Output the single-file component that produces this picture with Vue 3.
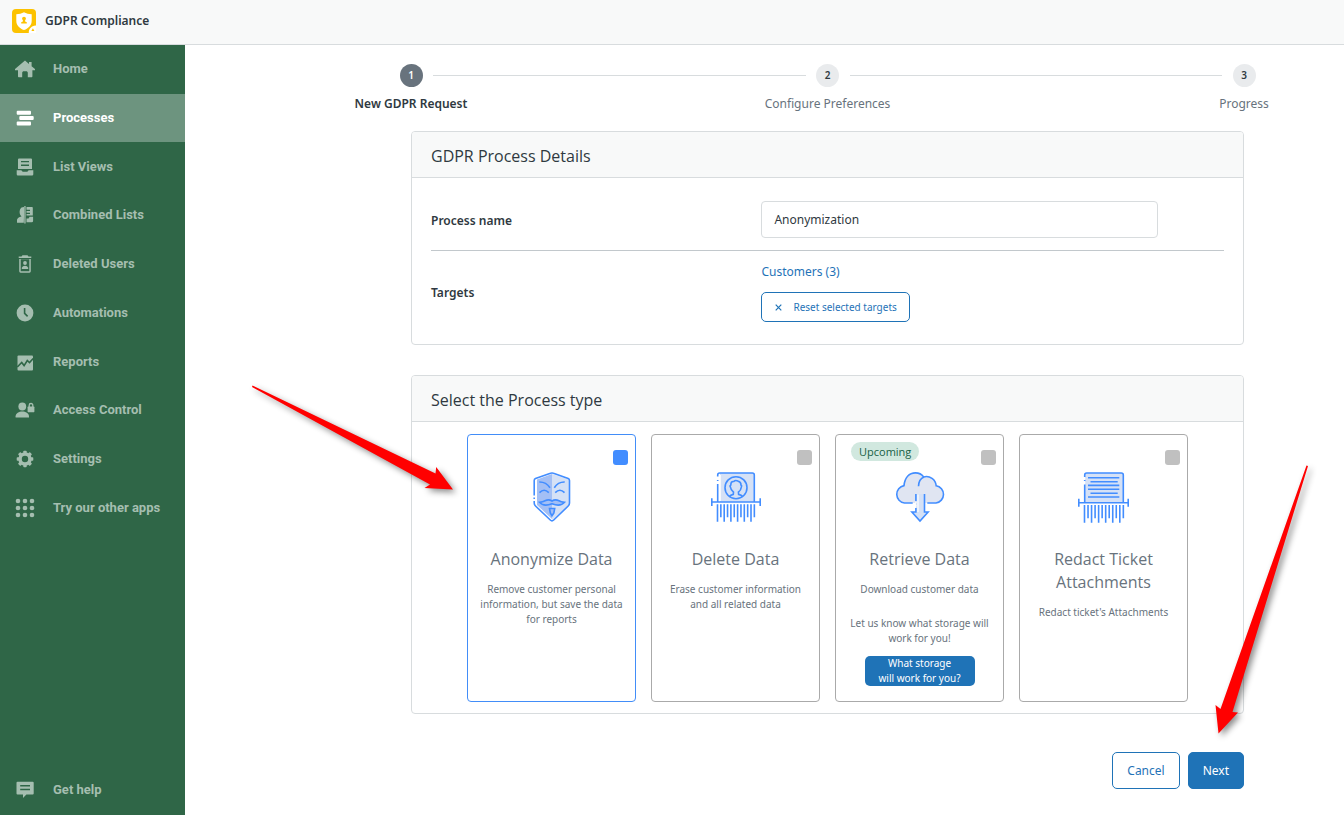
<script setup>
import { ref } from 'vue'

const navItems = [
  { label: 'Home', icon: 'home' },
  { label: 'Processes', icon: 'processes' },
  { label: 'List Views', icon: 'list' },
  { label: 'Combined Lists', icon: 'combined' },
  { label: 'Deleted Users', icon: 'deleted' },
  { label: 'Automations', icon: 'clock' },
  { label: 'Reports', icon: 'reports' },
  { label: 'Access Control', icon: 'access' },
  { label: 'Settings', icon: 'settings' },
  { label: 'Try our other apps', icon: 'apps' },
]
const active = ref('Processes')
const processName = ref('Anonymization')
const selected = ref(['anonymize'])

const gearTeeth = [0, 45, 90, 135, 180, 225, 270, 315]
const dots = [3, 10, 17]
const longStrips = [0, 2, 4, 6, 8, 10]
const shortStrips = [1, 3, 5, 7, 9, 11]
const stripPath = (step, top, longEnd, shortEnd) =>
  longStrips.map((i) => `M${6.5 + i * step} ${top}V${longEnd}`).join('') +
  shortStrips.map((i) => `M${6.5 + i * step} ${top}V${shortEnd}`).join('')

const types = [
  { id: 'anonymize', title: 'Anonymize Data', text: 'Remove customer personal information, but save the data for reports' },
  { id: 'delete', title: 'Delete Data', text: 'Erase customer information and all related data' },
  { id: 'retrieve', title: 'Retrieve Data', text: 'Download customer data', upcoming: true },
  { id: 'redact', title: 'Redact Ticket Attachments', text: "Redact ticket's Attachments" },
]
</script>

<template>
  <div class="app">
    <header class="topbar">
      <svg class="logo" viewBox="0 0 24 24" aria-hidden="true">
        <rect width="24" height="24" rx="4" fill="#fcc200" />
        <path d="M12 3.2c2.3 1.2 4.800 1.900 7.700 2v6.600c0 4.600-3.200 7.700-7.700 9.300-4.500-1.600-7.700-4.700-7.700-9.300V5.200c2.900-.1 5.400-.8 7.700-2z" fill="#fff" />
        <circle cx="12" cy="9.600" r="1.900" fill="#fcc200" />
        <path d="M10.900 11h2.200v1.600l1.700.6v1.300H9.200v-1.300l1.700-.6z" fill="#fcc200" />
        <path d="M24 16.500V24h-7.200c-.5-3.600 2.700-7.700 7.200-7.500z" fill="#fff" />
        <path d="M20.900 19.200l1.500 2.800h-3z" fill="#fcc200" />
      </svg>
      <h1>GDPR Compliance</h1>
    </header>

    <div class="body">
      <aside class="sidebar">
        <nav class="nav">
          <a v-for="item in navItems" :key="item.icon" href="#" class="nav-item" :class="{ active: active === item.label }" @click.prevent="active = item.label">
            <svg class="nav-icon" viewBox="0 0 20 20" aria-hidden="true">
              <path v-if="item.icon === 'home'" d="M10 1.600l4 3.400V3h2.600v4.300L20 10v1.200h-2.600v6.100c0 .7-.4 1-1 1h-3.600v-4.500c0-1-.7-1.600-1.600-1.600H8.800c-.9 0-1.600.6-1.600 1.600v4.500H4c-.6 0-1-.3-1-1v-6.100H0V10z" />
              <g v-else-if="item.icon === 'processes'">
                <rect x="1.700" y="2.700" width="14.300" height="4" rx="1" />
                <rect x="4.300" y="8" width="14.400" height="4" rx="1" />
                <rect x="1.700" y="13.600" width="14.300" height="4" rx="1" />
              </g>
              <g v-else-if="item.icon === 'list'">
                <path fill-rule="evenodd" d="M4 1.500h12q1 0 1 1V12H3V2.500q0-1 1-1zM6 4v1.300h8V4zm0 3.600v1.300h8V7.600z" />
                <path d="M1.700 13.200h4.600l1.400 1.600h4.600l1.400-1.600h4.600v4q0 1.200-1.200 1.200H2.900q-1.200 0-1.200-1.200z" />
              </g>
              <g v-else-if="item.icon === 'combined'">
                <path d="M9 2v9.500l-.2 6.200H2v-3q.5-2.200 4.500-3.200C4.500 10 4.200 7 5 4.600 5.700 2.800 7 2 9 2z" />
                <path d="M9.300 1h1.300v17.500H9.300z" />
                <path fill-rule="evenodd" d="M11.500 2H17q.8 0 .8.800v7.700h-6.300V9H15V7.700h-3.500V6H15V4.700h-3.500z" />
                <path d="M11.500 13.500h2l1.200-1.700h3.400v4q0 1.500-1.500 1.500h-5.100z" />
              </g>
              <g v-else-if="item.icon === 'deleted'">
                <path fill-rule="evenodd" d="M7.500 1.300h5l1 1.200h2.800v1.600H3.700V2.500h2.800zM4.200 5h11.600v12.300q0 1.400-1.400 1.400H5.600q-1.400 0-1.400-1.400zm1.500.2v12h8.600v-12z" />
                <circle cx="10" cy="9" r="1.900" />
                <path d="M6.800 15v-1.300q.8-2 3.200-2t3.200 2V15z" />
              </g>
              <g v-else-if="item.icon === 'clock'">
                <circle cx="10" cy="10" r="8.400" />
                <path class="cut" d="M9.600 5v5.400l3 3" />
              </g>
              <g v-else-if="item.icon === 'reports'">
                <rect x="2.500" y="3.500" width="15.500" height="15" rx="1" />
                <path class="cut" d="M2.300 15l4.400-4.600 2.400 3.200 3.200-5.100 2.200 2L18.200 6.500" />
              </g>
              <g v-else-if="item.icon === 'access'">
                <circle cx="7.300" cy="6.500" r="3.900" />
                <path d="M.6 17.600v-1.300c0-3 3.500-4.700 6.700-4.700s6.700 1.700 6.700 4.700v1.300z" />
                <rect x="12.600" y="6.600" width="6.800" height="5.600" rx=".6" />
                <path class="line" d="M14.200 7V5.300a1.800 1.800 0 013.600 0V7" />
              </g>
              <g v-else-if="item.icon === 'settings'">
                <rect v-for="a in gearTeeth" :key="a" x="8.300" y="1.700" width="3.400" height="4" rx=".8" :transform="`rotate(${a} 10 10)`" />
                <path fill-rule="evenodd" d="M10 3.300a6.700 6.700 0 100 13.400 6.700 6.700 0 000-13.400zm0 3.500a3.200 3.200 0 110 6.400 3.200 3.200 0 010-6.400z" />
              </g>
              <g v-else>
                <template v-for="y in dots" :key="y">
                  <circle v-for="x in dots" :key="x" :cx="x" :cy="y" r="2.300" />
                </template>
              </g>
            </svg>
            <span>{{ item.label }}</span>
          </a>
        </nav>
        <a href="#" class="nav-item help" @click.prevent>
          <svg class="nav-icon" viewBox="0 0 20 20" aria-hidden="true">
            <path fill-rule="evenodd" d="M2.500 1.700h15.200q1 0 1 1v10.900q0 1-1 1h-6.300L8 18v-3.400H2.500q-1 0-1-1V2.700q0-1 1-1zM5.200 5v1.500h9.800V5zm0 3.700v1.500h9.800V8.700z" />
          </svg>
          <span>Get help</span>
        </a>
      </aside>

      <main class="content">
        <ol class="stepper">
          <li class="step current"><span class="num">1</span><span>New GDPR Request</span></li>
          <li class="line" aria-hidden="true"></li>
          <li class="step"><span class="num">2</span><span>Configure Preferences</span></li>
          <li class="line" aria-hidden="true"></li>
          <li class="step"><span class="num">3</span><span>Progress</span></li>
        </ol>

        <section class="panel">
          <h2>GDPR Process Details</h2>
          <div class="form">
            <div class="row">
              <label for="process-name" class="label">Process name</label>
              <input id="process-name" v-model="processName" type="text" class="text-input" />
            </div>
            <div class="row targets">
              <span class="label">Targets</span>
              <div class="target-values">
                <a href="#" class="link" @click.prevent>Customers (3)</a>
                <button type="button" class="btn small">
                  <svg class="cross" viewBox="0 0 7 7" aria-hidden="true"><path d="M.7.700l5.600 5.600M6.300.700L.7 6.300" /></svg>
                  Reset selected targets
                </button>
              </div>
            </div>
          </div>
        </section>

        <section class="panel types">
          <h2>Select the Process type</h2>
          <div class="cards">
            <article v-for="t in types" :key="t.id" class="card" :class="{ chosen: selected.includes(t.id) }">
              <span v-if="t.upcoming" class="badge">Upcoming</span>
              <input :id="t.id" v-model="selected" type="checkbox" class="check" :value="t.id" />
              <svg v-if="t.id === 'anonymize'" class="art" viewBox="0 0 50 50" aria-hidden="true">
                <path d="M25 2L10 7.500V33l15 14z" fill="#a3bff5" />
                <path d="M25 2l17 5.500V33L25 48z" fill="#d5e1f6" />
                <path class="s" d="M7.200 23.500V8.500q0-1.400 1.300-2L23.500 1.300q1.500-.6 3 0l14.700 5.200q1.300.6 1.300 2v22.600q0 1.700-1.300 2.900L26.700 48q-1.700 1.600-3.400 0L8.500 34q-1.300-1.200-1.300-2.900V29M7.200 25.500v1.500" />
                <path class="s" d="M12.300 10q6.700-.2 10.700 5.700M37.700 10q-6.700-.2-10.400 5.700M12.500 20.600q4.600-4.800 9.300 0M28.200 20.600q4.700-4.800 9.300 0" />
                <path class="s" fill="#a3bff5" d="M12.500 30.300q3.500-.3 5.500-1.500 3.800-2 7 .2 3.200-2.200 7-.2 2 1.200 5.500 1.500-4 4.800-12.500 1.500-8.500 3.300-12.500-1.500z" />
                <path class="s" fill="#a3bff5" d="M22.500 36.500h5.200l-.8 4.500L25 43.800 23.300 41z" />
              </svg>
              <svg v-else-if="t.id === 'delete'" class="art" viewBox="0 0 50 50" aria-hidden="true">
                <path d="M9 1h34v29H9z" fill="#d5e1f6" />
                <path class="s" d="M6.700 4.500V3q0-2 2-2h32.600q2 0 2 2v27M6.700 8v1M6.700 12v18M.8 30h48.400M.8 26.300V34M49.200 26.300V34" />
                <path class="w" d="M9.200 3v26" />
                <circle class="s" cx="25" cy="15.700" r="11" />
                <path class="s" d="M18.500 24.500q1-1.600 3.800-2.100l.2-2.200q-2.800-2.400-3-5-1-1.400.3-2.200 0-4 3-3.500 1.600-1.700 4-.5 3.400 1 3.200 4 1.200.9.300 2.200-.2 2.600-2.900 5l.2 2.200q2.900.5 3.900 2.100" />
                <path class="s" :d="stripPath(3.35, 32.3, 49.7, 45.3)" />
              </svg>
              <svg v-else-if="t.id === 'retrieve'" class="art" viewBox="0 0 50 50" aria-hidden="true">
                <path fill="#e0e5f2" d="M9.500 31a8.800 8.800 0 01-.5-17.400C9.800 6 14 .9 20.500.9c3.500 0 6.300 1.500 8.200 4 6-1.600 12 2.500 12.500 8.900a8.700 8.700 0 01-.2 17.200z" />
                <path class="s" d="M17.700 31H9.500a8.800 8.800 0 01-.5-17.400C9.800 6 14 .9 20.500.9c3.500 0 6.300 1.500 8.200 4 6-1.600 12 2.500 12.500 8.900a8.700 8.700 0 01-.2 17.200h-8.700M23.500 14.300c.2-5 2.500-8.200 5.500-9.300" />
                <path fill="#d5e1f6" d="M20.900 22h8.600v18h3.600L25 49l-8.100-9h4z" />
                <path class="s" d="M20.900 22v7M20.900 36v4h-4L25 49l8.100-9h-3.600V22" />
                <path class="w" d="M20.900 30v1M20.900 33v1.500M23 22.500V40" />
              </svg>
              <svg v-else class="art wide" viewBox="0 0 51 51" aria-hidden="true">
                <path d="M7 1h38v30H7z" fill="#d5e1f6" />
                <path class="s" d="M6.700 5V3q0-2 2-2h34.600q2 0 2 2v27.700M6.700 8v1M6.700 12.500v18M.8 30.700h49.400M.8 26.700v8M50.200 26.700v8" />
                <path class="w" d="M6.700 6v1.200M6.700 10v1.500" />
                <path class="s" d="M10 5.700h31.300M12.500 9.700h27.200M10 13.400h31.300M10 17.300h31.300M12.500 21.300h27.200M10 25h31.300" />
                <path class="s" :d="stripPath(3.53, 33, 50.7, 46.3)" />
              </svg>
              <h3><label :for="t.id">{{ t.title }}</label></h3>
              <p>{{ t.text }}</p>
              <template v-if="t.upcoming">
                <p class="ask">Let us know what storage will work for you!</p>
                <button type="button" class="btn primary tiny">What storage<br />will work for you?</button>
              </template>
            </article>
          </div>

          <svg class="arrow arrow-left" viewBox="0 0 220 125" aria-hidden="true">
            <path d="M12.500 10.500l183 88 .7-6.500L213 114.500l-28.500-1.500 5.500-3.500L12 12z" />
          </svg>
          <svg class="arrow arrow-right" viewBox="0 0 110 285" aria-hidden="true">
            <path d="M97.500 10.500l1.500.5-75.500 246 5.500.5L9.500 278.500 6.500 250l5 4z" />
          </svg>
        </section>

        <div class="actions">
          <button type="button" class="btn">Cancel</button>
          <button type="button" class="btn primary">Next</button>
        </div>
      </main>
    </div>
  </div>
</template>

<style>
body {
  margin: 0;
  background: #fff;
}
</style>

<style scoped>
* {
  box-sizing: border-box;
}
.app {
  min-height: 100vh;
  display: flex;
  flex-direction: column;
  font-family: "Noto Sans", "Open Sans", sans-serif;
  font-size: 12px;
  line-height: 20px;
  color: #2f3941;
}
h1, h2, h3, p, ol {
  margin: 0;
  padding: 0;
}
.topbar {
  display: flex;
  align-items: center;
  gap: 9px;
  height: 45px;
  padding: 0 12px 3px;
  background: #f8f9f9;
  border-bottom: 1px solid #d8dcde;
}
.logo {
  width: 24px;
  height: 24px;
}
h1 {
  font-size: 12px;
  font-weight: 600;
}
.body {
  flex: 1;
  display: flex;
}
.sidebar {
  flex: 0 0 185px;
  display: flex;
  flex-direction: column;
  justify-content: space-between;
  background: #2f6647;
  font-family: Roboto, "Liberation Sans", Arial, sans-serif;
}
.nav {
  display: grid;
  grid-template-rows: repeat(10, 1fr);
  height: 487px;
}
.nav-item {
  display: flex;
  align-items: center;
  gap: 18px;
  padding-left: 15px;
  font-size: 13px;
  font-weight: 700;
  color: #a5beb0;
  text-decoration: none;
  --bg: #2f6647;
}
.nav-item.active {
  --bg: #6d947f;
  background: #6d947f;
  color: #fff;
}
.help {
  height: 51px;
}
.nav-icon {
  width: 20px;
  height: 20px;
  fill: currentColor;
}
.nav-icon .cut {
  fill: none;
  stroke: var(--bg);
  stroke-width: 1.600;
}
.nav-icon .line {
  fill: none;
  stroke: currentColor;
  stroke-width: 1.300;
}
.content {
  flex: 1;
  min-width: 0;
  padding: 19px 100px 20px 226px;
}
.stepper {
  display: flex;
  list-style: none;
  margin: 0 -80px 17px;
}
.step {
  flex: 0 0 160px;
  display: flex;
  flex-direction: column;
  align-items: center;
  gap: 7px;
  color: #68737d;
}
.step.current {
  font-weight: 600;
  color: #2f3941;
}
.num {
  width: 23px;
  height: 23px;
  border-radius: 50%;
  background: #e9ebed;
  color: #2f3941;
  font-size: 10px;
  font-weight: 600;
  line-height: 23px;
  text-align: center;
}
.current .num {
  background: #68737d;
  color: #fff;
}
.stepper .line {
  flex: 1;
  height: 1px;
  margin: 11px -58px 0;
  background: #d8dcde;
}
.panel {
  border: 1px solid #d8dcde;
  border-radius: 4px;
}
.panel h2 {
  height: 46px;
  padding: 2px 19px 0;
  border-bottom: 1px solid #d8dcde;
  border-radius: 3px 3px 0 0;
  background: #f8f9f9;
  font-family: "Open Sans", "Noto Sans", sans-serif;
  font-size: 16px;
  font-weight: 400;
  line-height: 44px;
}
.form {
  padding: 23px 19px 22px;
}
.row {
  display: grid;
  grid-template-columns: 5fr 6fr 1fr;
  align-items: center;
}
.label {
  padding-top: 2px;
  font-weight: 600;
}
.text-input {
  min-width: 0;
  height: 37px;
  padding: 0 12px;
  border: 1px solid #d8dcde;
  border-radius: 4px;
  background: #fff;
  color: #2f3941;
  font: inherit;
}
.targets {
  margin-top: 12px;
  padding-top: 11px;
  border-top: 1px solid #c2c8cc;
}
.target-values {
  display: flex;
  flex-direction: column;
  align-items: flex-start;
  gap: 10px;
}
.link {
  color: #1f73b7;
  text-decoration: none;
}
.btn {
  height: 37px;
  padding: 0 14px;
  border: 1px solid #1f73b7;
  border-radius: 5px;
  background: #fff;
  color: #1f73b7;
  font: inherit;
}
.primary {
  background: #1f73b7;
  color: #fff;
}
.small {
  display: flex;
  align-items: center;
  gap: 11px;
  height: 30px;
  padding: 0 12px 0 13px;
  font-size: 10px;
}
.cross {
  width: 7px;
  height: 7px;
  fill: none;
  stroke: currentColor;
  stroke-width: 1.200;
}
.types {
  position: relative;
  margin-top: 30px;
}
.cards {
  display: flex;
  justify-content: center;
  gap: 15px;
  padding: 12px 15px 11px;
}
.card {
  position: relative;
  flex: 0 1 169px;
  display: flex;
  flex-direction: column;
  align-items: center;
  padding: 37px 8px 15px;
  border: 1px solid #aaa;
  border-radius: 4px;
  color: #68737d;
  text-align: center;
}
.card.chosen {
  border-color: #428df8;
}
.art {
  width: 50px;
  height: 50px;
  overflow: visible;
}
.art.wide {
  width: 51px;
  height: 51px;
  margin-bottom: -1px;
}
.art .s {
  stroke: #428dff;
  stroke-width: 1.600;
}
.art .s:not([fill]) {
  fill: none;
}
.art .w {
  fill: none;
  stroke: #fff;
  stroke-width: 1.200;
}
.card h3 {
  margin-top: 26px;
  font-family: "Open Sans", "Noto Sans", sans-serif;
  font-size: 16px;
  font-weight: 400;
  line-height: 23px;
}
.card p {
  margin-top: 11px;
  font-size: 10px;
  line-height: 15px;
}
.card .ask {
  margin-top: 19px;
}
.tiny {
  width: 110px;
  height: 30px;
  margin-top: 10px;
  padding: 0;
  border: 0;
  font-size: 10px;
  line-height: 15px;
}
.check {
  position: absolute;
  top: 15px;
  right: 7px;
  width: 15px;
  height: 15px;
  margin: 0;
  appearance: none;
  border-radius: 3px;
  background: #c0c0c0;
}
.check:checked {
  background: #428dff;
}
.badge {
  position: absolute;
  top: 7px;
  left: 15px;
  padding: 0 8px;
  border-radius: 10px;
  background: #d1e8df;
  color: #186146;
  font-family: "Open Sans", "Noto Sans", sans-serif;
  font-size: 11px;
  line-height: 19px;
}
.arrow {
  position: absolute;
  fill: #f00;
  filter: drop-shadow(3px 3px 3px rgba(0, 0, 0, 0.45));
  pointer-events: none;
}
.arrow-left {
  top: -1px;
  left: -172px;
  width: 220px;
  height: 125px;
}
.arrow-right {
  top: 79px;
  right: -76px;
  width: 110px;
  height: 285px;
}
.actions {
  display: flex;
  justify-content: flex-end;
  gap: 8px;
  margin-top: 38px;
}
</style>
